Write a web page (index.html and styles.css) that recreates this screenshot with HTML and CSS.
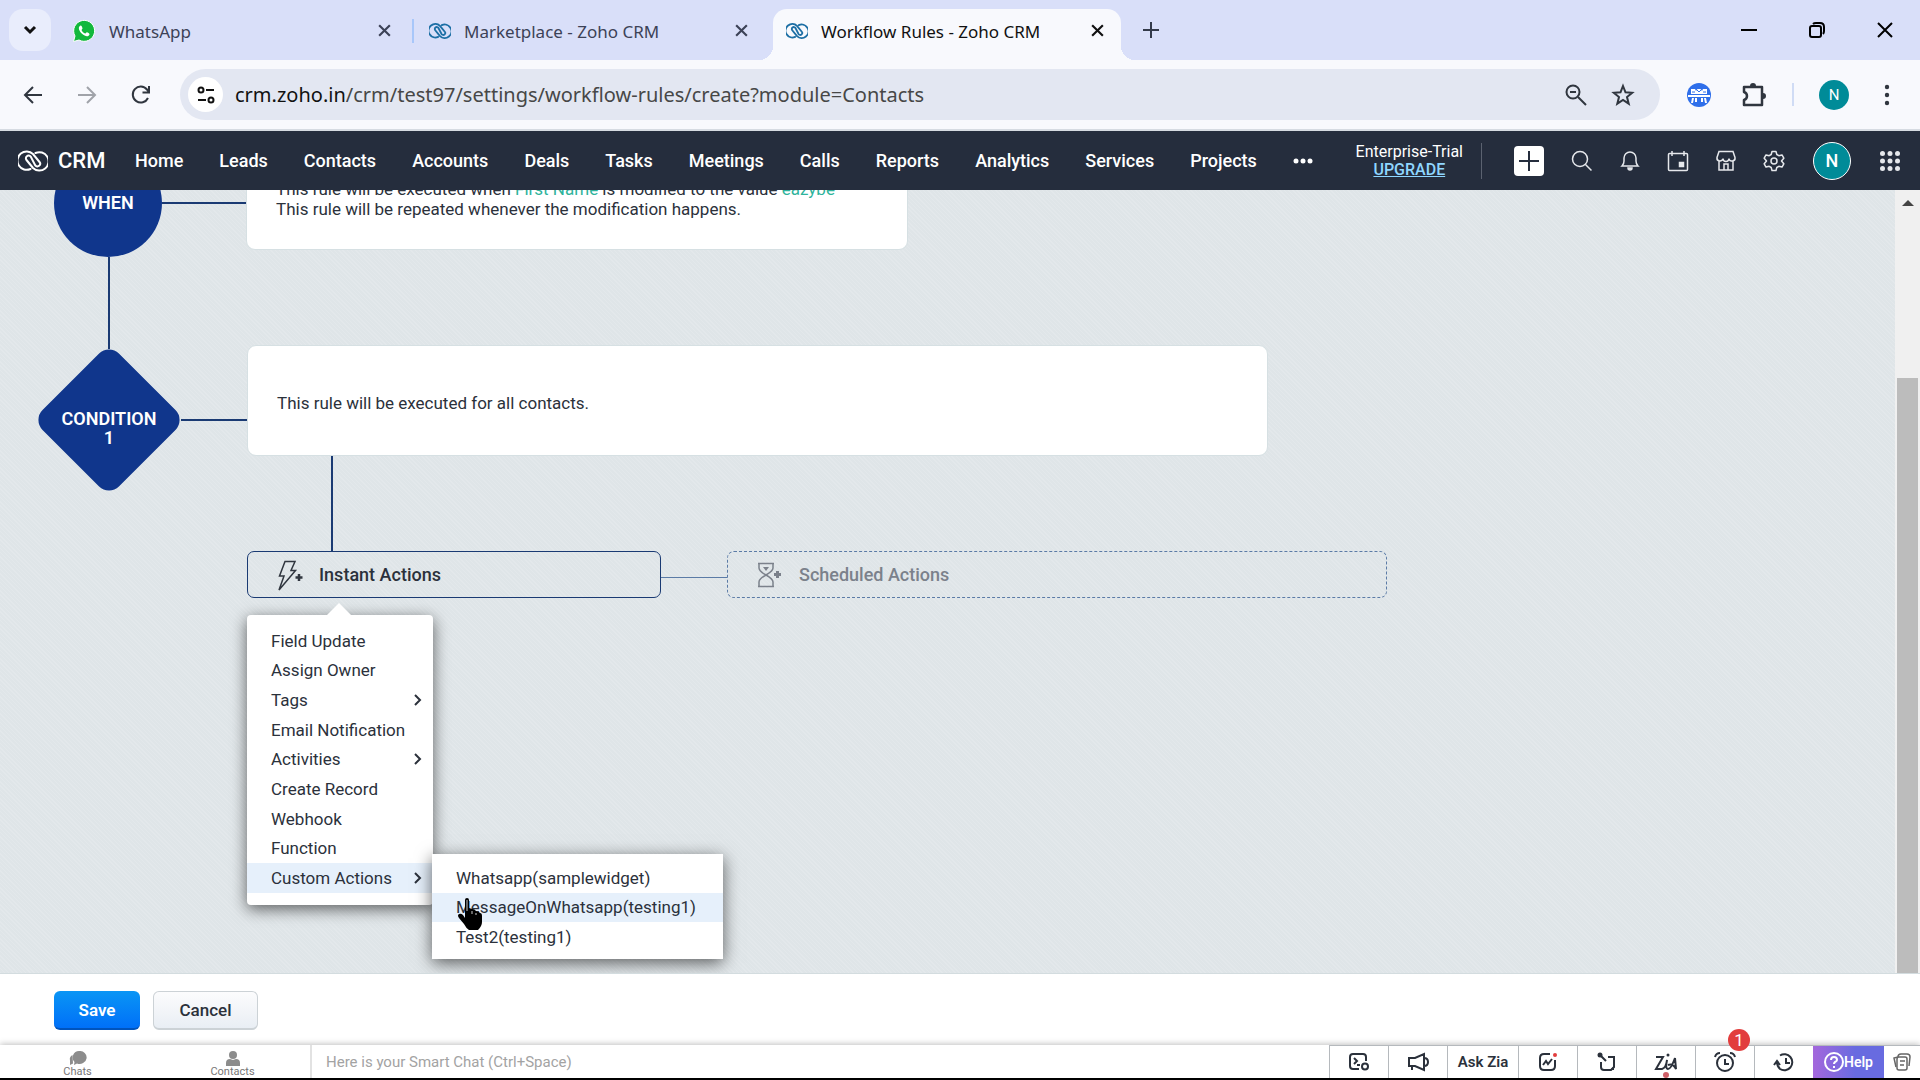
FILE: index.html
```
<!DOCTYPE html>
<html lang="en">
<head>
  <meta charset="UTF-8">
  <title>Workflow Rules - Zoho CRM</title>
  <link rel="stylesheet" href="styles.css">
</head>
<body>

  <!-- shared symbols -->
  <svg class="defs" aria-hidden="true">
    <symbol id="zoho" viewBox="0 0 30 24">
      <path d="M12.500 20A9.200 9.200 0 1 1 15 5l6.500 8a2.700 2.700 0 0 1-4.200 3.400L12.700 7.600a2.700 2.700 0 0 0-4.200 3.400l6.500 8A9.200 9.200 0 1 0 17.500 4" fill="none" stroke="currentColor" stroke-linecap="round"/>
    </symbol>
    <symbol id="close" viewBox="0 0 14 14"><path d="M2 2l10 10M12 2L2 12" stroke="currentColor" stroke-width="2"/></symbol>
    <symbol id="chevron" viewBox="0 0 8 12"><path d="M1 1l5 5-5 5" fill="none" stroke="currentColor" stroke-width="2"/></symbol>
  </svg>

  <header class="tabstrip">
    <button class="tab-search" aria-label="Search tabs"><svg width="16" height="16" viewBox="0 0 16 16"><path d="M3 5l5 5 5-5" fill="none" stroke="#111" stroke-width="3"/></svg></button>
    <div class="tab">
      <svg width="24" height="24" viewBox="0 0 24 24"><path d="M1.500 22.500l1.500-5.500A10.500 10.500 0 1 1 7 21z" fill="#12b83c" stroke="#fff"/><path d="M8.500 6.500c-3 1.500-1.500 5.500 1.500 8.300s6.500 3.500 7.500.7c.3-1-1.800-2.200-2.600-2.200-.7 0-.9 1.300-1.700 1.200-1.600-.5-3-1.800-3.600-3.300-.1-.8 1-1.100.9-1.900-.2-.9-1-3.100-2-2.800z" fill="#fff"/></svg>
      <span>WhatsApp</span>
      <button aria-label="Close tab"><svg width="15" height="15"><use href="#close"/></svg></button>
    </div>
    <div class="tab divided">
      <svg class="zoho-tab" width="22" height="18"><use href="#zoho"/></svg>
      <span>Marketplace - Zoho CRM</span>
      <button aria-label="Close tab"><svg width="15" height="15"><use href="#close"/></svg></button>
    </div>
    <div class="tab active">
      <svg class="zoho-tab" width="22" height="18"><use href="#zoho"/></svg>
      <span>Workflow Rules - Zoho CRM</span>
      <button aria-label="Close tab"><svg width="15" height="15"><use href="#close"/></svg></button>
    </div>
    <button class="new-tab" aria-label="New tab"><svg width="16" height="16" viewBox="0 0 16 16"><path d="M8 0v16M0 8h16" stroke="#333a4a" stroke-width="2"/></svg></button>
    <div class="window-buttons">
      <button aria-label="Minimize"><svg width="16" height="16" viewBox="0 0 16 16"><path d="M0 8h16" stroke="#000" stroke-width="2"/></svg></button>
      <button aria-label="Restore"><svg width="16" height="16" viewBox="0 0 16 16"><g fill="none" stroke="#000" stroke-width="2"><rect x="1" y="4" width="11" height="11" rx="2"/><path d="M4 2q1-1 3-1h4q4 0 4 4v4q0 2-1 3"/></g></svg></button>
      <button aria-label="Close"><svg width="18" height="18" viewBox="0 0 18 18"><path d="M2 2l14 14M16 2L2 16" stroke="#000" stroke-width="2"/></svg></button>
    </div>
  </header>

  <div class="toolbar">
    <button aria-label="Back"><svg width="20" height="20" viewBox="0 0 20 20"><path d="M19 10H2M10 2l-8 8 8 8" fill="none" stroke="#30363f" stroke-width="2"/></svg></button>
    <button aria-label="Forward"><svg width="20" height="20" viewBox="0 0 20 20"><path d="M1 10h17M10 2l8 8-8 8" fill="none" stroke="#a0a3a9" stroke-width="2"/></svg></button>
    <button aria-label="Reload"><svg width="20" height="20" viewBox="0 0 20 20"><path d="M17 13a8 8 0 1 1-1-8.500l2 2.500M18 1v6.500h-6.500" fill="none" stroke="#30363f" stroke-width="2"/></svg></button>
    <div class="address">
      <button class="site-info" aria-label="Site information"><svg width="18" height="18" viewBox="0 0 18 18"><g fill="none" stroke="#111" stroke-width="2"><circle cx="4" cy="4" r="2.500"/><circle cx="14" cy="14" r="2.500"/><path d="M9 4h8M1 14h8"/></g></svg></button>
      <span class="url"><b>crm.zoho.in</b>/crm/test97/settings/workflow-rules/create?module=Contacts</span>
      <svg width="22" height="22" viewBox="0 0 22 22"><g fill="none" stroke="#30363f" stroke-width="2"><circle cx="8" cy="8" r="6.500"/><path d="M13 13l8 8M5 8h6"/></g></svg>
      <svg width="24" height="24" viewBox="0 0 24 24"><path d="M12 3l2.500 6.300 6.700.5-5.200 4.300 1.700 6.600L12 17l-5.700 3.700L8 14.100 2.800 9.800l6.700-.5z" fill="none" stroke="#30363f" stroke-width="2"/></svg>
    </div>
    <svg class="extension" width="24" height="24" viewBox="0 0 24 24"><circle cx="12" cy="12" r="12" fill="#2f6fea"/><g fill="#fff"><path d="M4 6h4l1 2 1.500-2h3L15 8l1-2h4v5H4z"/><path d="M1 12h22v2H1zM5 15h2l-1 5H4zM8 15h2v4H8zM14 15h2v4h-2zM17 15h2l1 5h-2z"/></g><path d="M10 7l2 2 2-2M5 9h3M16 9h3" fill="none" stroke="#2f6fea"/></svg>
    <svg class="puzzle" width="26" height="26" viewBox="0 0 26 26"><path d="M3 5h18v18H3v-5q3-1 3-4t-3-4z" fill="none" stroke="#30363f" stroke-width="2.500" stroke-linejoin="round"/><path d="M9 4a3 3 0 0 1 6 0zM22 11a3 3 0 0 1 0 6z" fill="#30363f"/></svg>
    <i class="separator"></i>
    <span class="profile">N</span>
    <button aria-label="Menu"><svg width="6" height="22" viewBox="0 0 6 22"><g fill="#30363f"><circle cx="3" cy="3" r="2.200"/><circle cx="3" cy="11" r="2.200"/><circle cx="3" cy="19" r="2.200"/></g></svg></button>
  </div>

  <nav class="crm-nav">
    <a class="brand" href="#"><svg width="30" height="24"><use href="#zoho"/></svg>CRM</a>
    <div class="modules">
      <a href="#">Home</a>
      <a href="#">Leads</a>
      <a href="#">Contacts</a>
      <a href="#">Accounts</a>
      <a href="#">Deals</a>
      <a href="#">Tasks</a>
      <a href="#">Meetings</a>
      <a href="#">Calls</a>
      <a href="#">Reports</a>
      <a href="#">Analytics</a>
      <a href="#">Services</a>
      <a href="#">Projects</a>
      <button aria-label="More"><svg width="20" height="6" viewBox="0 0 20 6"><g fill="#fff"><circle cx="3" cy="3" r="2.500"/><circle cx="10" cy="3" r="2.500"/><circle cx="17" cy="3" r="2.500"/></g></svg></button>
    </div>
    <div class="trial">Enterprise-Trial<a href="#">UPGRADE</a></div>
    <div class="nav-tools">
      <button class="add" aria-label="Create"><svg width="20" height="20" viewBox="0 0 20 20"><path d="M10 0v20M0 10h20" stroke="#252d3d" stroke-width="2"/></svg></button>
      <button aria-label="Search"><svg width="22" height="22" viewBox="0 0 22 22"><circle cx="9" cy="9" r="7.500"/><path d="M14.500 14.500l6 6"/></svg></button>
      <button aria-label="Notifications"><svg width="22" height="22" viewBox="0 0 22 22"><path d="M3 16q2-2 2-5V8a6 6 0 0 1 12 0v3q0 3 2 5z"/><path d="M9 18a2 2 0 0 0 4 0z" fill="#e6e8ec"/></svg></button>
      <button aria-label="Calendar"><svg width="22" height="22" viewBox="0 0 22 22"><rect x="1.500" y="3.500" width="19" height="17" rx="1"/><path d="M5 1v5M17 1v5"/><rect x="12.500" y="12.500" width="4" height="4" fill="#e6e8ec"/></svg></button>
      <button aria-label="Marketplace"><svg width="22" height="22" viewBox="0 0 22 22"><path d="M4 1.500h14l2 6a3 3 0 0 1-6 1 3 3 0 0 1-6 0 3 3 0 0 1-6-1zM4 11v9h14v-9M9 20v-6h4v6"/></svg></button>
      <button aria-label="Setup"><svg width="22" height="22" viewBox="0 0 22 22"><path d="M9 1.500h4l.8 3 2 1.200 3.200-.8 1.800 3.300-2.300 2.800 2.300 2.800-1.800 3.300-3.200-.8-2 1.200-.8 3H9l-.8-3-2-1.200-3.200.8-1.800-3.300L3.500 11 1.200 8.200 3 4.900l3.200.8 2-1.200z" stroke-linejoin="round"/><circle cx="11" cy="11" r="3"/></svg></button>
      <span class="avatar">N</span>
      <button aria-label="Apps"><svg width="20" height="20" viewBox="0 0 20 20"><g fill="#e6e8ec" stroke="none"><circle cx="2.500" cy="2.500" r="2.500"/><circle cx="10" cy="2.500" r="2.500"/><circle cx="17.500" cy="2.500" r="2.500"/><circle cx="2.500" cy="10" r="2.500"/><circle cx="10" cy="10" r="2.500"/><circle cx="17.500" cy="10" r="2.500"/><circle cx="2.500" cy="17.500" r="2.500"/><circle cx="10" cy="17.500" r="2.500"/><circle cx="17.500" cy="17.500" r="2.500"/></g></svg></button>
    </div>
  </nav>

  <main class="workspace">
    <div class="canvas">
      <section class="step step-when">
        <div class="node circle">WHEN</div>
        <i class="link-h"></i>
        <div class="card card-when">
          <p>This rule will be executed when <em>First Name</em> is modified to the value <em>eazybe</em></p>
          <p>This rule will be repeated whenever the modification happens.</p>
        </div>
      </section>

      <i class="link-v link-node"></i>

      <section class="step step-condition">
        <div class="node diamond"><span>CONDITION<br>1</span></div>
        <i class="link-h"></i>
        <div class="branch">
          <div class="card card-condition"><p>This rule will be executed for all contacts.</p></div>
          <i class="link-v link-actions"></i>
          <div class="actions">
            <div class="instant">
              <button class="action">
                <svg width="26" height="32" viewBox="0 0 26 32"><path d="M8 2.500h10l-4 9h4.500L2 31l5-14H2.500z" fill="none" stroke="#30363f" stroke-width="1.500"/><path d="M22 15v7M18.500 18.500h7" stroke="#30363f" stroke-width="2.500"/></svg>
                Instant Actions
              </button>
              <ul class="menu">
                <li>Field Update</li>
                <li>Assign Owner</li>
                <li>Tags <svg width="8" height="12"><use href="#chevron"/></svg></li>
                <li>Email Notification</li>
                <li>Activities <svg width="8" height="12"><use href="#chevron"/></svg></li>
                <li>Create Record</li>
                <li>Webhook</li>
                <li>Function</li>
                <li class="selected">Custom Actions <svg width="8" height="12"><use href="#chevron"/></svg>
                  <ul class="submenu">
                    <li>Whatsapp(samplewidget)</li>
                    <li class="selected">MessageOnWhatsapp(testing1)
                      <svg class="pointer" width="26" height="34" viewBox="0 0 26 34"><path d="M8 3q0-2 2-2t2 2v8l3 1q3 0 4 2 3 0 4 2 2 0 2 3v6q0 4-4 8h-9q-3-2-5-6l-5-6q-2-3 0-4t4 1l2 3z" fill="#000"/><path d="M10 3v11M15 14v3M19 16v2" stroke="#ccc" stroke-width="1"/></svg>
                    </li>
                    <li>Test2(testing1)</li>
                  </ul>
                </li>
              </ul>
            </div>
            <i class="link-h link-scheduled"></i>
            <button class="action scheduled">
              <svg width="26" height="26" viewBox="0 0 26 26"><path d="M1 1.500h16M1 24.500h16M2 2v4q0 3 7 7-7 4-7 7v4M16 2v4q0 3-7 7 7 4 7 7v4" fill="none" stroke="#7b818b" stroke-width="1.500"/><path d="M6 5h6l-3 4z" fill="#7b818b"/><path d="M20.500 9v7M17 12.500h7" stroke="#7b818b" stroke-width="3"/></svg>
              Scheduled Actions
            </button>
          </div>
        </div>
      </section>
    </div>
    <div class="scrollbar"><i class="up"></i><i class="thumb"></i></div>
  </main>

  <footer class="form-bar">
    <button class="save">Save</button>
    <button class="cancel">Cancel</button>
  </footer>

  <div class="chatbar">
    <button class="chat-tab"><svg width="18" height="15" viewBox="0 0 18 15"><path d="M10 0a7 6.500 0 1 1-2 12.500L5 14l.5-3A6.500 6.500 0 0 1 10 0z" fill="#8c8c8c"/><path d="M3.500 4Q0 6 1 9.500L1 14l3-1.500" fill="#8c8c8c"/></svg>Chats</button>
    <button class="chat-tab"><svg width="14" height="15" viewBox="0 0 14 15"><circle cx="7" cy="4" r="4" fill="#8c8c8c"/><path d="M0 15v-3q0-4 4-4l3 1 3-1q4 0 4 4v3z" fill="#8c8c8c"/></svg>Contacts</button>
    <input class="smart-chat" type="text" aria-label="Smart Chat" placeholder="Here is your Smart Chat (Ctrl+Space)">
    <div class="chat-tools">
      <button aria-label="Console"><svg width="22" height="20" viewBox="0 0 22 20"><path d="M18 9V5q0-3-3-3H5Q2 2 2 5v9q0 3 3 3h6M6 6l3 3-3 3M9 13h3"/><circle cx="17" cy="14.500" r="3"/></svg></button>
      <button aria-label="Announcements"><svg width="22" height="20" viewBox="0 0 22 20"><path d="M2 6h6l9-4v16l-9-4H2zM5 14v4M17 6q4 0 4 4t-4 4"/></svg></button>
      <button class="ask">Ask Zia</button>
      <button aria-label="Insights"><svg width="20" height="20" viewBox="0 0 20 20"><path d="M12 2H6Q2 2 2 6v8q0 4 4 4h7q4 0 4-4V8M5 13l3-4 2 3 4-5"/><circle cx="17" cy="3" r="2" fill="#e23d3d" stroke="none"/></svg></button>
      <button aria-label="Gestures"><svg width="20" height="20" viewBox="0 0 20 20"><path d="M11 5h6v10l-3 3H7q-3 0-3-3v-5M3 3l6 6"/><circle cx="3" cy="3" r="2.500" fill="#2b313b" stroke="none"/><path d="M17 14v4h-4z" fill="#2b313b" stroke="none"/></svg></button>
      <button class="zia" aria-label="Zia"><svg width="24" height="20" viewBox="0 0 24 20"><path d="M2 5h7L2 17h6q4-1 5-9-2 9 1 9 3 0 7-11l1 11q-3-6-8-4"/><circle cx="14" cy="3" r="1.500" fill="#2b313b" stroke="none"/></svg></button>
      <button class="reminder" aria-label="Reminders"><svg width="22" height="22" viewBox="0 0 22 22"><circle cx="11" cy="12" r="8"/><path d="M11 8v5h4M1 6q1-4 5-4M21 6q-1-4-5-4"/></svg><span class="badge">1</span></button>
      <button aria-label="Recent items"><svg width="22" height="22" viewBox="0 0 22 22"><path d="M7 4.500a8 8 0 1 1 0 13.500M13 7v5h4M1 14l3-4 3 4M4 11q0 4 3 7"/></svg></button>
      <button class="help"><svg width="20" height="20" viewBox="0 0 20 20"><circle cx="10" cy="10" r="9"/><path d="M7 8q0-3 3-3t3 3q0 1-2 2-1 1-1 2M10 14v2"/></svg>Help</button>
      <button class="notes" aria-label="Notes"><svg width="18" height="18" viewBox="0 0 18 18"><rect x="4" y="4" width="10" height="13" rx="2"/><path d="M7 8h5M7 12h4M3 14L1 5l4-1M5 4q0-3 3-3h6q3 0 3 3l-1 9"/></svg></button>
    </div>
  </div>

</body>
</html>
```
FILE: styles.css
```
* { box-sizing: border-box; }
body { margin: 0; height: 100vh; display: flex; flex-direction: column; overflow: hidden; background: #fff; border-bottom: 2px solid #000; font-family: Roboto, "Liberation Sans", sans-serif; font-size: 17px; line-height: 20px; color: #2b313b; }
button { border: 0; background: none; padding: 0; font: inherit; color: inherit; display: flex; align-items: center; justify-content: center; }
svg { display: block; flex: none; }
a { color: inherit; text-decoration: none; }
ul { list-style: none; margin: 0; padding: 0; }
p { margin: 0; }
.defs { position: absolute; width: 0; height: 0; }

/* browser tabs */
.tabstrip { flex: none; height: 60px; display: flex; background: #d9dff9; font-family: "Noto Sans", "Open Sans", sans-serif; }
.tab-search { width: 42px; height: 42px; margin: 9px 8px 0 9px; border-radius: 14px; background: #e9edfc; }
.tab { position: relative; width: 357px; height: 51px; margin-top: 9px; padding: 0 24px 8px 13px; display: flex; align-items: center; gap: 13px; color: #3c4257; }
.tab span { flex: 1; padding-top: 2px; }
.tab.divided::before { content: ""; position: absolute; left: -4px; top: 10px; width: 2px; height: 24px; background: #a8c7fa; }
.zoho-tab { color: #1d6fa5; stroke-width: 2.5; }
.tab.active { width: 348px; padding-right: 16px; background: #f8f9fd; color: #111; border-radius: 14px 14px 0 0; }
.tab.active::before, .tab.active::after { content: ""; position: absolute; bottom: 0; width: 14px; height: 14px; }
.tab.active::before { left: -14px; background: radial-gradient(circle at 0 0, transparent 14px, #f8f9fd 14px); }
.tab.active::after { right: -14px; background: radial-gradient(circle at 100% 0, transparent 14px, #f8f9fd 14px); }
.new-tab { width: 60px; }
.window-buttons { margin-left: auto; display: flex; padding-right: 1px; }
.window-buttons button { width: 68px; }

/* address bar */
.toolbar { flex: none; height: 71px; display: flex; align-items: center; background: #f8f9fd; border-bottom: 2px solid #d6dbe2; padding: 0 13px 0 6px; }
.toolbar > button { width: 54px; height: 40px; }
.toolbar > button:last-child { width: 40px; }
.address { flex: 1; height: 51px; margin-left: 12px; padding: 0 25px 0 8px; border-radius: 26px; background: #e3e7f2; display: flex; align-items: center; gap: 24px; font: 20px "Noto Sans", "Open Sans", sans-serif; color: #474747; }
.site-info { width: 35px; height: 35px; border-radius: 50%; background: #fff; }
.url { flex: 1; margin-left: -12px; }
.url b { font-weight: 400; color: #111; }
.extension { margin: 0 30px 0 27px; }
.separator { width: 2px; height: 23px; margin: 0 25px; background: #d0dcf5; }
.profile { width: 30px; height: 30px; border-radius: 50%; background: #008b98; color: #fff; font-size: 15px; line-height: 30px; text-align: center; margin-right: 18px; }

/* crm navigation */
.crm-nav { flex: none; height: 59px; display: flex; align-items: center; background: #252d3d; color: #fff; padding: 0 6px 0 18px; font-size: 18px; font-weight: 500; }
.brand { display: flex; align-items: center; gap: 10px; width: 117px; font-size: 22px; stroke-width: 2; }
.modules { display: flex; gap: 36px; align-items: center; }
.trial { margin-left: auto; padding-right: 18px; border-right: 1px solid #5b6270; text-align: center; font-size: 16px; line-height: 18px; font-weight: 400; }
.trial a { display: block; color: #8fd6ff; text-decoration: underline; font-weight: 500; }
.nav-tools { display: flex; align-items: center; margin-left: 23px; }
.nav-tools button { width: 48px; height: 48px; }
.nav-tools svg { fill: none; stroke: #e6e8ec; stroke-width: 1.5; }
.nav-tools .add { width: 30px; height: 30px; margin: 0 14px 0 9px; border-radius: 4px; background: #fff; }
.avatar { width: 38px; height: 38px; margin: 0 15px; border: 1px solid #fff; border-radius: 50%; background: #008b98; line-height: 36px; text-align: center; }

/* workflow canvas */
.workspace { flex: 1; min-height: 0; display: flex; }
.canvas { flex: 1; min-width: 0; overflow: hidden; padding-left: 37px; background: repeating-linear-gradient(45deg, #e3e8eb 0 1px, #dfe5e8 1px 3px); }
.step { display: flex; }
.step-when { margin-top: -41px; height: 108px; align-items: center; }
.node { flex: none; display: flex; align-items: center; justify-content: center; color: #fff; font-size: 18px; font-weight: 600; text-align: center; }
.circle { width: 108px; height: 108px; margin-left: 17px; border-radius: 50%; background: #10368c; }
.link-h { flex: 1; height: 2px; background: #1a3a73; }
.link-v { display: block; width: 2px; background: #1a3a73; }
.step > .link-h { flex: none; width: 66px; }
.step-when > .link-h { width: 84px; }
.card { background: #fff; border: 1px solid #d6e0e3; border-radius: 9px; padding: 0 29px; display: flex; flex-direction: column; justify-content: center; }
.card em { font-style: normal; color: #2eb39b; }
.card-when { width: 662px; height: 93px; padding-bottom: 8px; }
.link-node { height: 92px; margin: 0 0 -4px 71px; }
.diamond { position: relative; width: 144px; height: 144px; margin-top: 3px; padding-top: 16px; }
.diamond::before { content: ""; position: absolute; left: 18px; top: 18px; width: 108px; height: 108px; border-radius: 14px; background: #10368c; transform: rotate(45deg); }
.diamond span { position: relative; line-height: 19px; }
.step-condition > .link-h { margin-top: 74px; }
.step-when > .link-h { width: 84px; }
.branch { flex: 1; }
.card-condition { width: 1021px; height: 111px; padding-top: 4px; }
.link-actions { height: 95px; margin-left: 84px; }
.actions { display: flex; align-items: center; width: 1140px; }
.instant { position: relative; width: 414px; }
.action { width: 100%; height: 47px; padding-left: 29px; justify-content: flex-start; gap: 16px; border: 1px solid #1a3a73; border-radius: 7px; font-size: 18px; font-weight: 500; }
.actions .link-scheduled { height: 1px; margin-top: 6px; background: #5b7ba6; }
.scheduled { width: 660px; border: 1px dashed #5b7ba6; color: #7b818b; }

/* popup menus */
.menu, .submenu { position: absolute; display: grid; background: #fff; box-shadow: 0 4px 16px rgba(0, 0, 0, .6); }
.menu { left: 0; top: 64px; width: 186px; height: 290px; padding: 11px 0 12px; border-radius: 4px; }
.menu::before { content: ""; position: absolute; left: 80px; top: -12px; border: 12px solid transparent; border-top: 0; border-bottom-color: #fff; }
.menu li { position: relative; display: flex; align-items: center; justify-content: space-between; padding: 0 11px 0 24px; white-space: nowrap; }
.menu li.selected { background: #e6f0fb; }
.submenu { left: 185px; top: -9px; width: 291px; height: 105px; padding: 9px 0 8px; z-index: 1; }
.pointer { position: absolute; left: 25px; top: 4px; }

.scrollbar { flex: none; width: 25px; padding: 10px 2px 0; background: #f0f0f0; overflow: hidden; }
.up { display: block; width: 0; margin: 0 auto 172px; border: 6px solid transparent; border-top: 0; border-bottom-color: #444; }
.thumb { display: block; height: 100%; background: #bcbcbc; }

/* save bar */
.form-bar { flex: none; height: 72px; padding: 17px 54px; display: flex; gap: 13px; border-top: 1px solid #d3dcdf; background: #fff; z-index: 0; }
.form-bar button { height: 39px; border-radius: 6px; font-weight: 500; }
.form-bar .save { width: 86px; background: linear-gradient(#0a95f5, #0070f8); border-bottom: 2px solid #0054bd; color: #fff; font-weight: 600; }
.form-bar .cancel { width: 105px; background: linear-gradient(#fcfcfd, #e9eef4); border: 1px solid #ccd2d6; border-bottom-width: 2px; }

/* bottom bar */
.chatbar { flex: none; height: 33px; display: flex; background: #fff; box-shadow: 0 -1px 6px rgba(0, 0, 0, .25); z-index: 1; }
.chat-tab { width: 155px; flex-direction: column; justify-content: flex-end; font-size: 11px; line-height: 12px; color: #777; }
.smart-chat { flex: 1; border: 0; border-left: 2px solid #e2e2e2; padding: 0 14px; font: inherit; font-size: 15px; background: none; }
.smart-chat::placeholder { color: #a3a3a3; }
.chat-tools { display: flex; border-top: 1px solid #b5b9bd; }
.chat-tools button { position: relative; width: 59px; border-left: 1px solid #b5b9bd; }
.chat-tools svg { fill: none; stroke: #2b313b; stroke-width: 2; }
.chat-tools .ask { width: 71px; font-size: 15px; font-weight: 600; }
.zia::after { content: ""; position: absolute; bottom: 0; left: 26px; width: 6px; height: 6px; border-radius: 50%; background: #cf6068; }
.badge { position: absolute; right: 4px; top: -17px; width: 22px; height: 22px; border-radius: 50%; background: #e23d3d; color: #fff; line-height: 22px; }
.chat-tools .help { width: 71px; border: 0; background: linear-gradient(90deg, #a467dc, #686be0 60%); color: #fff; font-size: 14px; font-weight: 600; }
.chat-tools .help svg { stroke: #fff; }
.chat-tools .notes { width: 36px; border: 0; }
.chat-tools .notes svg { stroke: #666; stroke-width: 1.5; }
```
